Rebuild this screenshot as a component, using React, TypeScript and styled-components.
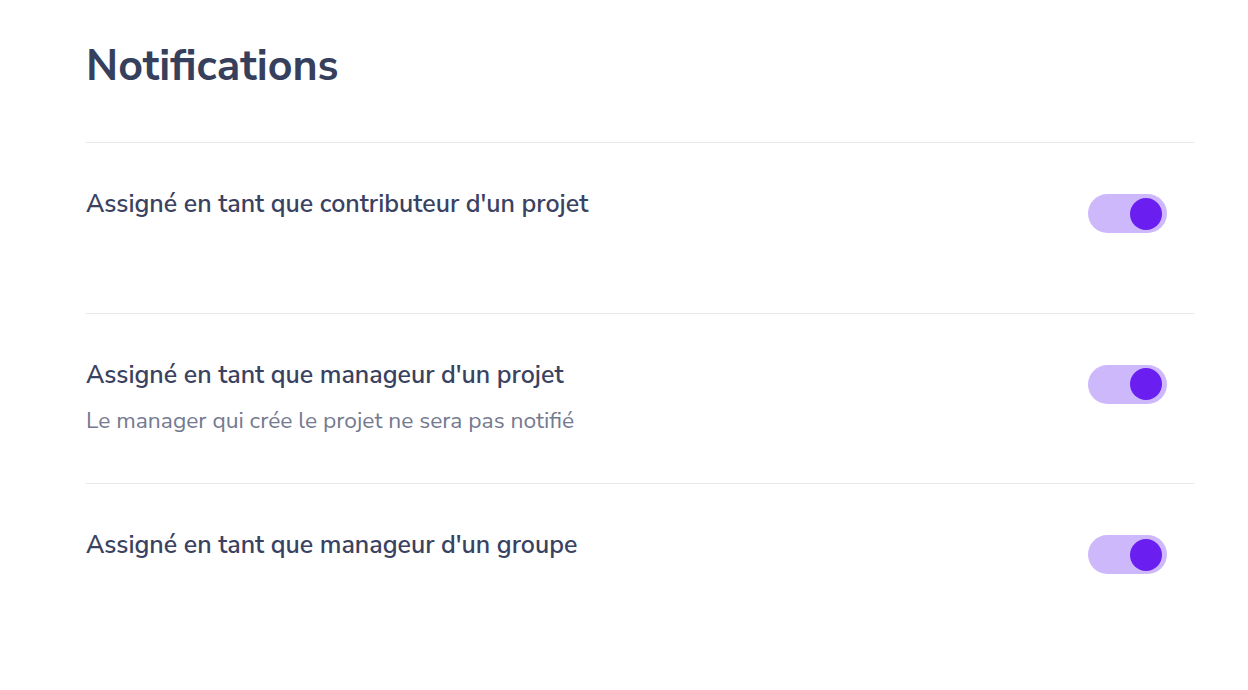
import React, { useState } from "react";
import styled, { createGlobalStyle } from "styled-components";

const Global = createGlobalStyle`
  html, body { margin: 0; padding: 0; background: #ffffff; }
  body { font-family: "Nunito Sans", Lato, "Open Sans", sans-serif; -webkit-font-smoothing: antialiased; }
  * { box-sizing: border-box; }
`;

const Page = styled.div`
  padding: 42px 54px 0 86px;
`;

const Title = styled.h1`
  margin: 0 0 52px;
  font-size: 43px;
  line-height: 48px;
  font-weight: 700;
  color: #363f5c;
  letter-spacing: 0;
`;

const List = styled.div`
  display: flex;
  flex-direction: column;
`;

const Row = styled.div`
  display: flex;
  align-items: flex-start;
  justify-content: space-between;
  border-top: 1px solid #e7e7ec;
  min-height: 170.5px;
  padding: 45px 27px 0 0;
`;

const Texts = styled.div`
  display: flex;
  flex-direction: column;
`;

const Label = styled.div`
  font-size: 25px;
  line-height: 32px;
  font-weight: 600;
  color: #3a4261;
`;

const Hint = styled.div`
  margin-top: 15px;
  font-size: 22.8px;
  line-height: 30px;
  font-weight: 400;
  color: #747a90;
`;

const Track = styled.button<{ $on: boolean }>`
  margin-top: 6px;
  width: 79px;
  height: 39px;
  border: none;
  padding: 0 5px 0 4px;
  border-radius: 20px;
  background: ${(p) => (p.$on ? "#cdb8fb" : "#e2e2e8")};
  display: flex;
  align-items: center;
  justify-content: ${(p) => (p.$on ? "flex-end" : "flex-start")};
  cursor: pointer;
`;

const Knob = styled.span<{ $on: boolean }>`
  width: 32px;
  height: 32px;
  border-radius: 50%;
  background: ${(p) => (p.$on ? "#6a1ef0" : "#ffffff")};
`;

const Toggle: React.FC<{ initial?: boolean }> = ({ initial = true }) => {
  const [on, setOn] = useState(initial);
  return (
    <Track $on={on} onClick={() => setOn(!on)} aria-pressed={on}>
      <Knob $on={on} />
    </Track>
  );
};

const items = [
  { label: "Assigné en tant que contributeur d'un projet" },
  {
    label: "Assigné en tant que manageur d'un projet",
    hint: "Le manager qui crée le projet ne sera pas notifié",
  },
  { label: "Assigné en tant que manageur d'un groupe" },
];

export default function App() {
  return (
    <>
      <Global />
      <Page>
        <Title>Notifications</Title>
        <List>
          {items.map((it) => (
            <Row key={it.label}>
              <Texts>
                <Label>{it.label}</Label>
                {it.hint && <Hint>{it.hint}</Hint>}
              </Texts>
              <Toggle />
            </Row>
          ))}
        </List>
      </Page>
    </>
  );
}
